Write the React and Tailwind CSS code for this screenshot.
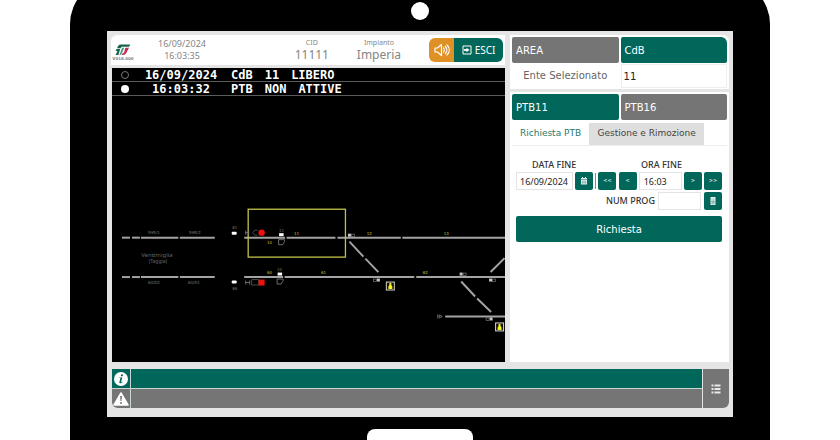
import React from "react";

const font = "font-['DejaVu_Sans',sans-serif]";

function Logo() {
    return (
        <svg viewBox="0 0 34 26" className="h-3 w-4" aria-hidden="true">
            <path d="M12 1h21l-3 5H17c-3 0-4 1-5 3H4c2-5 4-8 8-8Z" fill="#17644f" />
            <path d="M3 11h8L7 24H1l4-9H1Z" fill="#17644f" />
            <path d="M15 8h5l-5 11c-1 3-3 5-6 5l2-5Z" fill="#4f9c84" />
            <path d="M22 8h8l-5 10c-2 4-4 6-8 6h-3l2-4c2 0 3-1 4-4Z" fill="#c92c50" />
        </svg>
    );
}

function SpeakerIcon() {
    return (
        <svg viewBox="0 0 16 14" className="h-[14px] w-4" fill="none" stroke="#fff" strokeWidth="1.2" strokeLinejoin="round" strokeLinecap="round" aria-hidden="true">
            <path d="M1 5v4h2.500L7.500 12.500v-11L3.500 5Z" />
            <path d="M9.500 5c1 1 1 3 0 4M11.300 3.500c2 2 2 5 0 7M13 2c3 3 3 7 0 10" />
        </svg>
    );
}

function ExitIcon() {
    return (
        <svg viewBox="0 0 10 10" className="size-[10px]" fill="none" stroke="#fff" aria-hidden="true">
            <path d="M1 1h8v8H1Z" />
            <path d="M2 5h3" strokeWidth="1.800" />
            <path d="m4.500 2.800 3 2.200-3 2.200Z" fill="#fff" stroke="none" />
        </svg>
    );
}

function CalendarIcon() {
    return (
        <svg viewBox="0 0 8 8" className="size-2" aria-hidden="true">
            <path d="M1 1h1V0h1v1h2V0h1v1h1v1.500H1Z" fill="#e4f1ee" />
            <path d="M1 3h6v4.500H1Z" fill="#e4f1ee" />
            <path d="M2.500 3.500v3.500M4 3.500v3.500M5.500 3.500v3.500M1.500 5.200h5" stroke="#00675a" strokeWidth=".3" />
        </svg>
    );
}

function KeypadIcon() {
    return (
        <svg viewBox="0 0 8 8" className="size-2" aria-hidden="true">
            <path d="M1.500 0h5v8h-5Z" fill="#e4f1ee" />
            <path d="M2.200 2h3.600M3.200 3v4.500M4.800 3v4.500M2 4.500h4M2 6h4" stroke="#00675a" strokeWidth=".3" />
        </svg>
    );
}

// Grey/hollow pair that marks the position of a switch
function SwitchMark({ x, y, flip }) {
    return (
        <g>
            <rect x={flip ? x + 4 : x} y={y} width="3" height="3" fill="#c4c4c4" />
            <rect x={flip ? x + 0.5 : x + 3.5} y={y + 0.5} width="3" height="2.500" fill="none" stroke="#777" strokeWidth=".7" />
        </g>
    );
}

function Warden({ x, y }) {
    return (
        <g>
            <rect x={x} y={y} width="8" height="8" fill="#111" stroke="#d5d5c8" />
            <path d={`M${x + 3} ${y + 1}h2v2l1 1.500v2.500h-4v-2.500l1-1.500Z`} fill="#f4f01c" />
        </g>
    );
}

const tracks = [
    [122, 130, 238], [132, 140, 238], [141, 178.5, 238], [180, 215, 238],
    [244.5, 285.5, 238], [287, 336, 238], [338, 401.5, 238], [403, 506, 238],
    [122, 130, 277.5], [132, 140, 277.5], [141, 178.5, 277.5], [180, 215, 277.5],
    [244.5, 283.5, 277.5], [285, 415, 277.5], [417, 506, 277.5],
    [446, 506, 317],
];

const trackNames = [
    ["10", 270, 244], ["11", 297, 235], ["12", 370, 235], ["13", 447, 235],
    ["60", 270, 274], ["61", 324, 274], ["62", 426, 274],
];

const farNames = [
    ["59R/1", 154, 234], ["59R/2", 195, 234], ["60/D2", 154, 284], ["60/D1", 194, 284],
    ["81", 235, 229], ["11", 282, 232], ["10", 280, 271], ["86", 235, 290],
];

function TrackMap() {
    return (
        <svg viewBox="112 96 394 267" className={`block h-auto w-full ${font}`} role="img" aria-label="Ventimiglia">
            <g stroke="#a3a3a3" strokeWidth="2">
                {tracks.map(([a, b, y]) => <path key={`${a}-${y}`} d={`M${a} ${y}H${b}`} />)}
                <path d="m350 242 14 15M366 259l13 13.500M462 282l14 15M478 299l14 13.500M491.500 272.500l14-14" />
            </g>
            <rect x="248.500" y="209.500" width="97.500" height="48" fill="none" stroke="#c3c34a" strokeWidth="1.300" />

            <g fontSize="4" textAnchor="middle" fill="#c4c43a">
                {trackNames.map(([name, x, y]) => <text key={name} x={x} y={y}>{name}</text>)}
            </g>
            <g fontSize="4" textAnchor="middle" fill="#777">
                {farNames.map(([name, x, y]) => <text key={`${x}-${y}`} x={x} y={y}>{name}</text>)}
            </g>
            <g textAnchor="middle" fill="#666" className="font-['Noto_Sans',sans-serif]">
                <text x="157" y="257" fontSize="6">Ventimiglia</text>
                <text x="158" y="263" fontSize="5">(Taggia)</text>
            </g>

            {/* Signals */}
            <g fill="#fff">
                <rect x="232" y="232" width="5" height="3" rx="1" />
                <rect x="232" y="281" width="5" height="3" rx="1" />
                <rect x="279.500" y="233.500" width="4.500" height="3" />
                <rect x="278" y="273" width="4.500" height="3" />
            </g>
            <g fill="none" stroke="#858585" strokeWidth=".8">
                <path d="M279 240h6v2l-2 3h-4ZM277.500 279.500h6v2l-2 3h-4Z" />
                <path d="M246 231v4M246 233h3M249 231v4M246 281v4M246 283h4M250 281v4" />
                <path d="M258 230.500h-3l-2 2.500 2 2.500h3M252 280h7v5.500h-7Z" stroke="#5c5c5c" />
                <path d="M438.500 315v4M440 315.500v3l3-1.500Z" />
            </g>
            <circle cx="262" cy="233" r="3.200" fill="#ee1111" />
            <rect x="259" y="280" width="6" height="6" fill="#ee1111" />

            <SwitchMark x={348.5} y={234} />
            <SwitchMark x={373.5} y={279} flip />
            <SwitchMark x={460.5} y={273} />
            <SwitchMark x={490} y={279} />
            <SwitchMark x={486.5} y={318} flip />
            <Warden x={387} y={282.5} />
            <Warden x={496.5} y={323.5} />
        </svg>
    );
}

function LogRow({ on, time, words }) {
    return (
        <li className="flex h-[14px] items-center border-b border-[#5a5a5a] pl-[9px] font-['DejaVu_Sans_Mono',monospace] text-[12px] leading-[14px] font-bold text-white">
            <span className={on ? "size-2 rounded-full bg-white" : "size-2 rounded-full border border-[#777]"} />
            <span className="ml-[10px] w-[84px] text-center">{time}</span>
            <span className="ml-2 flex gap-3">
                {words.map((word) => <span key={word}>{word}</span>)}
            </span>
        </li>
    );
}

function Tab({ active, className = "", children }) {
    return (
        <button className={`h-[26px] rounded-xs px-1 text-left text-[10px] text-white ${active ? "bg-[#00675a]" : "bg-[#757575]"} ${className}`}>
            {children}
        </button>
    );
}

function SmallButton({ label, children }) {
    return (
        <button aria-label={label} className="flex h-[18px] w-[18px] shrink-0 items-center justify-center rounded-xs bg-[#00675a] text-[5px] text-white">
            {children}
        </button>
    );
}

function Header() {
    return (
        <header className="flex h-[30px] items-center rounded-tl-md bg-white pr-[2px] text-[#858585]">
            <div className="flex w-6 flex-col items-center pt-1">
                <Logo />
                <span className="text-[4px] leading-[5px] font-bold">V018.000</span>
            </div>
            <div className="ml-[14px] w-[66px] text-center font-['Noto_Sans',sans-serif] text-[9px] leading-3">
                <div>16/09/2024</div>
                <div>16:03:35</div>
            </div>
            <div className="mr-[12px] ml-auto w-[66px] text-center font-['Noto_Sans',sans-serif]">
                <div className="text-[7px] leading-[10px]">CID</div>
                <div className="text-[12px] leading-[14px]">11111</div>
            </div>
            <div className="mr-[28px] text-center font-['Noto_Sans',sans-serif]">
                <div className="text-[7px] leading-[10px]">Impianto</div>
                <div className="text-[12px] leading-[14px]">Imperia</div>
            </div>
            <button aria-label="Audio" className="flex h-6 w-[25px] items-center justify-center rounded-l-md bg-[#e09126]">
                <SpeakerIcon />
            </button>
            <button className="flex h-6 w-[49px] items-center justify-center gap-[3px] rounded-r-md bg-[#00675a] font-['Noto_Sans',sans-serif] text-[10px] text-white">
                <ExitIcon />
                ESCI
            </button>
        </header>
    );
}

function EntityCard() {
    return (
        <section className="grid grid-cols-2 gap-x-[2px] rounded-tr-md bg-white px-[2px] pt-[2px] pb-[1px]">
            <Tab>AREA</Tab>
            <Tab active className="rounded-tr-md">CdB</Tab>
            <label htmlFor="ente" className="flex h-6 items-center justify-center text-[10px] text-[#666]">Ente Selezionato</label>
            <input id="ente" defaultValue="11" className="mt-[1px] h-6 w-full min-w-0 border border-[#eee] px-[2px] text-[10px] text-[#222] outline-none" />
        </section>
    );
}

function RequestCard() {
    const field = "h-[18px] min-w-0 border border-[#e4e4e4] font-['Noto_Sans',sans-serif] text-[#222] outline-none text-[9px]";
    return (
        <section className="flex-1 bg-white px-[2px] pt-[2px]">
            <div className="grid grid-cols-2 gap-x-[2px]">
                <Tab active>PTB11</Tab>
                <Tab>PTB16</Tab>
            </div>
            <div className="mt-[3px] flex h-[23px] border-b border-[#eee] text-[9px]">
                <button className="w-[77px] text-[#1f7a68]">Richiesta PTB</button>
                <button className="w-[115px] bg-[#dedede] text-[#444]">Gestione e Rimozione</button>
            </div>
            <form className="mt-3 pr-[5px] pl-1" onSubmit={(e) => e.preventDefault()}>
                <div className="flex h-[14px] justify-between pr-10 pl-4 font-['Noto_Sans',sans-serif] text-[9px] leading-[14px] font-medium text-[#333]">
                    <label htmlFor="data">DATA FINE</label>
                    <label htmlFor="ora">ORA FINE</label>
                </div>
                <div className="flex items-center justify-between">
                    <input id="data" defaultValue="16/09/2024" className={`${field} w-[57px] px-[3px]`} />
                    <SmallButton label="Calendario"><CalendarIcon /></SmallButton>
                    <span className="h-4 w-px bg-[#888]" />
                    <SmallButton>&lt;&lt;</SmallButton>
                    <SmallButton>&lt;</SmallButton>
                    <input id="ora" defaultValue="16:03" className={`${field} w-[43px] px-1`} />
                    <SmallButton>&gt;</SmallButton>
                    <SmallButton>&gt;&gt;</SmallButton>
                </div>
                <div className="mt-[2px] flex items-center justify-end gap-[3px]">
                    <label htmlFor="prog" className="font-['Noto_Sans',sans-serif] text-[9px] font-medium text-[#333]">NUM PROG</label>
                    <input id="prog" className={`${field} w-[43px] px-1`} />
                    <SmallButton label="Tastiera"><KeypadIcon /></SmallButton>
                </div>
                <button className="mt-[6px] h-[26px] w-full rounded-xs bg-[#00675a] text-[10px] text-white">Richiesta</button>
            </form>
        </section>
    );
}

function MessageBar() {
    return (
        <footer className="mt-[7px] ml-px flex gap-px">
            <div className="flex min-w-0 flex-1 flex-col gap-px overflow-hidden rounded-bl-md bg-[#c9d6d3]">
                <div className="flex h-[19px] gap-px">
                    <div className="flex w-[18px] items-center justify-center bg-[#00675a]">
                        <svg viewBox="0 0 14 14" className="size-[14px]" aria-hidden="true">
                            <circle cx="7" cy="7" r="7" fill="#fff" />
                            <circle cx="7.900" cy="3.300" r="1.100" fill="#00675a" />
                            <path d="M5.400 5.500h2.900l-1.200 4.400c-.1.500.4.400 1.300-.3l.2.400c-1.400 1.800-3.600 1.700-3.200.1l.9-3.600c.1-.4-.2-.5-1-.5Z" fill="#00675a" />
                        </svg>
                    </div>
                    <div className="flex-1 bg-[#00675a]" />
                </div>
                <div className="flex h-[19px] gap-px">
                    <div className="flex w-[18px] items-center justify-center bg-[#757575]">
                        <svg viewBox="0 0 16 14" className="h-[14px] w-4" aria-hidden="true">
                            <path d="M8 1 15 13H1Z" fill="#fff" stroke="#fff" strokeWidth="1.500" strokeLinejoin="round" />
                            <path d="M7.100 4h1.800l-.4 5h-1Z" fill="#757575" />
                            <circle cx="8" cy="11" r="1" fill="#757575" />
                        </svg>
                    </div>
                    <div className="flex-1 bg-[#757575]" />
                </div>
            </div>
            <button aria-label="Elenco" className="flex w-[26px] items-center justify-center rounded-br-md bg-[#757575]">
                <svg viewBox="0 0 10 10" className="size-[10px]" stroke="#e8e8e8" strokeWidth="1.800" aria-hidden="true">
                    <path d="M.5 1.500h2M3.500 1.500h6M.5 5h2M3.500 5h6M.5 8.500h2M3.500 8.500h6" />
                </svg>
            </button>
        </footer>
    );
}

export default function App() {
    return (
        <main className={`h-screen overflow-hidden bg-white ${font}`}>
            {/* Device body, its top and bottom run past the window */}
            <div className="mx-[70px] -mt-5 rounded-[44px] bg-black px-[37px] pt-[22px]">
                <div className="mx-auto size-[18px] rounded-full bg-white" />
                <div className="mt-[11px] bg-[#e5e5e5] px-1 pt-1 pb-[9px]">
                    <div className="grid grid-cols-[9fr_5fr] gap-x-[5px]">
                        <div className="min-w-0">
                            <Header />
                            <div className="mt-[3px] ml-px bg-black">
                                <ul>
                                    <LogRow time="16/09/2024" words={["CdB", "11", "LIBERO"]} />
                                    <LogRow on time="16:03:32" words={["PTB", "NON", "ATTIVE"]} />
                                </ul>
                                <TrackMap />
                            </div>
                        </div>
                        <div className="flex min-w-0 flex-col gap-[3px]">
                            <EntityCard />
                            <RequestCard />
                        </div>
                    </div>
                    <MessageBar />
                </div>
                <div className="mx-auto mt-3 h-16 w-[106px] rounded-lg bg-white" />
            </div>
        </main>
    );
}
